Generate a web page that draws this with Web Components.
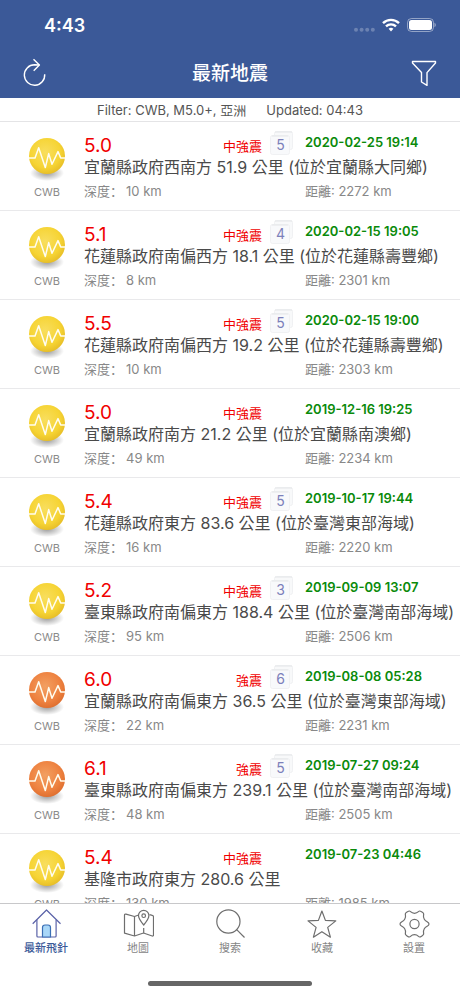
<!DOCTYPE html>
<html lang="zh-Hant">
<head>
<meta charset="utf-8">
<meta name="viewport" content="width=device-width, initial-scale=1">
<title>最新地震</title>
<style>
  html, body { margin: 0; height: 100%; }
  body {
    font-family: Inter, "Noto Sans CJK TC", sans-serif;
    background: #fff;
    color: #4a4a4a;
  }
</style>
</head>
<body>
<quake-app></quake-app>

<script>
const BRAND = '#3b5998';

const QUAKES = [
  { mag: '5.0', level: '中強震', reports: 5, time: '2020-02-25 19:14', place: '宜蘭縣政府西南方 51.9 公里 (位於宜蘭縣大同鄉)', depth: 10, distance: 2272 },
  { mag: '5.1', level: '中強震', reports: 4, time: '2020-02-15 19:05', place: '花蓮縣政府南偏西方 18.1 公里 (位於花蓮縣壽豐鄉)', depth: 8, distance: 2301 },
  { mag: '5.5', level: '中強震', reports: 5, time: '2020-02-15 19:00', place: '花蓮縣政府南偏西方 19.2 公里 (位於花蓮縣壽豐鄉)', depth: 10, distance: 2303 },
  { mag: '5.0', level: '中強震', time: '2019-12-16 19:25', place: '宜蘭縣政府南方 21.2 公里 (位於宜蘭縣南澳鄉)', depth: 49, distance: 2234 },
  { mag: '5.4', level: '中強震', reports: 5, time: '2019-10-17 19:44', place: '花蓮縣政府東方 83.6 公里 (位於臺灣東部海域)', depth: 16, distance: 2220 },
  { mag: '5.2', level: '中強震', reports: 3, time: '2019-09-09 13:07', place: '臺東縣政府南偏東方 188.4 公里 (位於臺灣南部海域)', depth: 95, distance: 2506 },
  { mag: '6.0', level: '強震', reports: 6, time: '2019-08-08 05:28', place: '宜蘭縣政府南偏東方 36.5 公里 (位於臺灣東部海域)', depth: 22, distance: 2231 },
  { mag: '6.1', level: '強震', reports: 5, time: '2019-07-27 09:24', place: '臺東縣政府南偏東方 239.1 公里 (位於臺灣南部海域)', depth: 48, distance: 2505 },
  { mag: '5.4', level: '中強震', time: '2019-07-23 04:46', place: '基隆市政府東方 280.6 公里', depth: 130, distance: 1985 },
];

/** <status-bar> - clock on the left, signal, wifi and battery on the right. */
class StatusBar extends HTMLElement {
  constructor() {
    super();
    this.attachShadow({ mode: 'open' }).innerHTML = `
      <style>
        :host {
          display: flex; align-items: center; justify-content: space-between;
          height: 50px; padding: 0 24px 0 44px; box-sizing: border-box;
          color: #fff; font-size: 18px; font-weight: 600;
        }
        .icons { display: flex; align-items: center; gap: 7px; }
        svg { display: block; }
      </style>
      <time>4:43</time>
      <div class="icons">
        <svg width="21" height="14" viewBox="0 0 21 14" fill="#fff" fill-opacity=".25">
          <circle cx="2" cy="11.800" r="2"/><circle cx="7.600" cy="11.800" r="2"/>
          <circle cx="13.200" cy="11.800" r="2"/><circle cx="18.800" cy="11.800" r="2"/>
        </svg>
        <svg width="18" height="14" viewBox="0 0 18 14" fill="none" stroke="#fff" stroke-width="2.400">
          <path d="M1 5.200A11.400 11.400 0 0 1 17 5.200"/>
          <path d="M4 8.400A7.200 7.200 0 0 1 14 8.400"/>
          <path d="M6.600 10.800a3.500 3.500 0 0 1 4.800 0L9 13.400z" fill="#fff" stroke="none"/>
        </svg>
        <svg width="29" height="14" viewBox="0 0 29 14">
          <rect x=".5" y=".5" width="26" height="13" rx="4" fill="none" stroke="#fff" stroke-opacity=".45"/>
          <rect x="2" y="2" width="23" height="10" rx="2.500" fill="#fff"/>
          <path d="M27.500 4.800c1.700.7 1.700 3.700 0 4.400z" fill="#fff" fill-opacity=".5"/>
        </svg>
      </div>
    `;
  }
}
customElements.define('status-bar', StatusBar);

/** <nav-bar> - slots: start, default (title), end. */
class NavBar extends HTMLElement {
  constructor() {
    super();
    this.attachShadow({ mode: 'open' }).innerHTML = `
      <style>
        :host {
          display: grid; grid-template-columns: 48px 1fr 48px; align-items: center;
          height: 48px; padding: 0 12px; color: #fff;
        }
        h1 { margin: 0; font-size: 19px; line-height: 24px; font-weight: 500; text-align: center; }
      </style>
      <slot name="start"></slot>
      <h1><slot></slot></h1>
      <slot name="end"></slot>
    `;
  }
}
customElements.define('nav-bar', NavBar);

/** <icon-button> - attributes: icon ("refresh" | "filter"), label */
class IconButton extends HTMLElement {
  connectedCallback() {
    const icons = {
      refresh: '<path d="M22.700 14.200a10.200 10.200 0 1 1-10.200-9.400l4.800.2"/><path d="M11.500-.7l5.900 5.800-5.700 5.600"/>',
      filter: '<path d="M2.500 1.500h23v1.500L17 12.600v12.800l-5.500-3.400v-9.400L2.500 3z"/>',
    };
    this.attachShadow({ mode: 'open' }).innerHTML = `
      <style>
        :host { display: block; }
        button {
          display: grid; place-items: center; width: 100%; height: 48px;
          margin: 0; padding: 0; border: 0; background: none; color: inherit; cursor: pointer;
        }
        svg { display: block; overflow: visible; }
      </style>
      <button type="button" aria-label="${this.getAttribute('label')}">
        <svg width="28" height="28" viewBox="0 0 28 28" fill="none" stroke="currentColor"
          stroke-width="1.400" stroke-linejoin="round">${icons[this.getAttribute('icon')]}</svg>
      </button>
    `;
  }
}
customElements.define('icon-button', IconButton);

/** <filter-summary> - the thin line below the header. */
class FilterSummary extends HTMLElement {
  constructor() {
    super();
    this.attachShadow({ mode: 'open' }).innerHTML = `
      <style>
        :host {
          display: flex; justify-content: center; gap: 20px; flex-shrink: 0;
          height: 24px; box-sizing: border-box; line-height: 24px; font-size: 13px; color: #555;
          border-bottom: 1px solid #e4e4e6; white-space: nowrap;
        }
      </style>
      <slot></slot>
    `;
  }
}
customElements.define('filter-summary', FilterSummary);

/** <quake-ball> - seismograph ball with its source. Attributes: tone ("yellow" | "orange") */
class QuakeBall extends HTMLElement {
  connectedCallback() {
    const stops = this.getAttribute('tone') === 'orange'
      ? ['#f2a062', '#ee8240', '#e07030']
      : ['#f8de5e', '#f6d434', '#e8bf28'];
    this.attachShadow({ mode: 'open' }).innerHTML = `
      <style>
        :host { display: flex; flex-direction: column; align-items: center; }
        svg { display: block; }
        .source { font-size: 11px; line-height: 16px; color: #8a8a8a; }
      </style>
      <svg width="44" height="47" viewBox="0 0 44 47">
        <defs>
          <radialGradient id="ball" cx=".45" cy=".4" r=".6">
            <stop offset="0" stop-color="${stops[0]}"/>
            <stop offset=".7" stop-color="${stops[1]}"/>
            <stop offset="1" stop-color="${stops[2]}"/>
          </radialGradient>
          <radialGradient id="shade">
            <stop offset="0" stop-color="#000" stop-opacity=".4"/>
            <stop offset="1" stop-color="#000" stop-opacity="0"/>
          </radialGradient>
        </defs>
        <ellipse cx="22" cy="36" rx="17" ry="8" fill="url(#shade)"/>
        <circle cx="22" cy="19" r="18" fill="url(#ball)"/>
        <path d="M4 21h6l3.700-10.300L20.300 30.600l3.400-14 3.300 10.600 6-12.600 2.700 6.400H40" fill="none"
          stroke="#fffdf0" stroke-width="1.500" stroke-linejoin="round"/>
      </svg>
      <span class="source"><slot></slot></span>
    `;
  }
}
customElements.define('quake-ball', QuakeBall);

/** <report-count> - number of reports on a small stack of sheets. */
class ReportCount extends HTMLElement {
  constructor() {
    super();
    this.attachShadow({ mode: 'open' }).innerHTML = `
      <style>
        :host { display: grid; width: 24px; height: 24px; }
        svg, span { grid-area: 1 / 1; }
        svg { display: block; }
        span {
          width: 21px; padding-top: 4px; box-sizing: border-box;
          font-size: 14px; line-height: 20px; text-align: center; color: #7c80ba;
        }
      </style>
      <svg width="24" height="24" viewBox="0 0 24 24" stroke="#f0f1f3">
        <rect x="4.500" y=".5" width="18" height="18" rx="2" fill="#f8f9fa"/>
        <path d="M5 1h17" stroke="#e4e6e8"/>
        <rect x=".5" y="4.500" width="19" height="19" rx="2" fill="#f8f9fb"/>
        <path d="M2 5h16" stroke="#e4e6e8"/>
      </svg>
      <span><slot></slot></span>
    `;
  }
}
customElements.define('report-count', ReportCount);

/** <quake-row> - one earthquake. Property: quake */
class QuakeRow extends HTMLElement {
  constructor() {
    super();
    this.attachShadow({ mode: 'open' });
  }

  set quake(val) { this._quake = val; this.render(); }
  get quake() { return this._quake; }

  render() {
    const q = this._quake;
    this.shadowRoot.innerHTML = `
      <style>
        :host {
          display: grid; grid-template-columns: 74px minmax(0, 1fr);
          height: 89px; padding-left: 10px; box-sizing: border-box;
          border-bottom: 1px solid #e9e9eb;
        }
        quake-ball { padding-top: 15px; }
        .info {
          display: grid; align-content: start; padding-top: 9px;
          grid-template-columns: minmax(0, 1fr) 43px 155px;
          grid-template-rows: 26px 20px 24px;
        }
        .top { display: flex; align-items: flex-end; justify-content: space-between; color: #f00000; }
        .mag { font-size: 19px; line-height: 22px; }
        .level { font-size: 13px; line-height: 22px; }
        report-count { margin-left: 8px; }
        time { font-size: 13px; line-height: 22px; font-weight: 600; color: #0a8a0a; }
        .place { grid-column: 1 / -1; margin: 0; font-size: 16px; line-height: 20px; font-weight: 400; white-space: nowrap; }
        .fact { font-size: 13px; line-height: 20px; padding-top: 4px; color: #888; white-space: nowrap; }
        .depth { grid-column: 1 / 3; display: flex; gap: 3px; }
        .depth .name { font-family: "Noto Sans CJK SC", sans-serif; }
      </style>
      <quake-ball tone="${parseFloat(q.mag) >= 6 ? 'orange' : 'yellow'}">CWB</quake-ball>
      <div class="info">
        <div class="top"><span class="mag">${q.mag}</span><span class="level">${q.level}</span></div>
        <div>${q.reports ? `<report-count>${q.reports}</report-count>` : ''}</div>
        <time>${q.time}</time>
        <h2 class="place">${q.place}</h2>
        <div class="fact depth"><span class="name" lang="zh-Hans">深度：</span><span>${q.depth} km</span></div>
        <div class="fact">距離: ${q.distance} km</div>
      </div>
    `;
  }
}
customElements.define('quake-row', QuakeRow);

/** <quake-list> - scrolling list. Property: items */
class QuakeList extends HTMLElement {
  constructor() {
    super();
    this.attachShadow({ mode: 'open' }).innerHTML = `
      <style>
        :host { display: block; overflow-y: auto; scrollbar-width: none; }
        ul { margin: 0; padding: 0; list-style: none; }
      </style>
      <ul></ul>
    `;
  }

  set items(val) {
    this.shadowRoot.querySelector('ul').replaceChildren(...val.map(quake => {
      const li = document.createElement('li');
      const row = document.createElement('quake-row');
      row.quake = quake;
      li.append(row);
      return li;
    }));
  }
}
customElements.define('quake-list', QuakeList);

/** <tab-item> - attributes: icon, href, active */
class TabItem extends HTMLElement {
  connectedCallback() {
    const icons = {
      home: `<g stroke="#5a62a8"><path d="M1.700 15.700L15.500 2l14 13.700"/><path d="M5.900 11.700v16.300q0 1 1 1h17.200q1 0 1-1V11.700"/></g>
        <path d="M11.500 29V19.500q0-2.500 2.500-2.500h3q2.500 0 2.500 2.500V29z" fill="#a9d7f8" stroke="#3b6fb5"/>`,
      map: `<path d="M15.600 7L11.500 8.500 3 6.200q-1.500-.3-1.500 1v18l10 2.800 9-3 8.700 3q1.300.2 1.300-1V9q0-1.300-1.200-1.600l-2.800-.8M11.500 8.500V28M20.700 20v5"/>
        <path d="M20.700 17c-2.900-3.500-5.200-6.400-5.200-9.500a5.200 5.200 0 0 1 10.400 0c0 3.100-2.300 6-5.200 9.500z"/><circle cx="20.700" cy="7.700" r="1.800"/>`,
      search: '<circle cx="13.400" cy="13.500" r="11.600"/><path d="M21.700 21.700l7.800 7.800"/>',
      star: '<path d="M14.900 3l3.500 9.400 10.400.5-8.100 6.500 2.700 9.800-8.500-5.500-8.500 5.500 2.700-9.800L1 12.900l10.400-.5z"/>',
      gear: `<path transform="translate(0 .5)" d="M10.500 2.500c1 0 1.500 2.300 5 2.300s4-2.300 5-2.300 4.200 1.800 4.200 2.900c0 1-1 2.600.6 5.300 1.700 2.900 4.700 2.400 4.700 4.800s-3 1.900-4.700 4.800c-1.600 2.700-.6 4.300-.6 5.300s-3.200 2.900-4.200 2.900-1.500-2.300-5-2.300-4 2.300-5 2.300-4.200-1.900-4.200-2.900 1-2.600-.6-5.300C4 17.400 1 17.900 1 15.500s3-1.900 4.700-4.800c1.600-2.700.6-4.300.6-5.300s3.200-2.900 4.200-2.900z"/>
        <circle cx="15.500" cy="16" r="4.600"/>`,
    };
    this.attachShadow({ mode: 'open' }).innerHTML = `
      <style>
        :host { display: block; flex: 1; }
        a {
          display: flex; flex-direction: column; align-items: center; gap: 1px;
          padding-top: 4px; color: #858585; text-decoration: none;
          font-size: 11px; line-height: 16px;
        }
        svg { display: block; stroke: #6e6e6e; }
        :host([active]) a { color: ${BRAND}; font-weight: 500; }
      </style>
      <a href="${this.getAttribute('href')}" ${this.hasAttribute('active') ? 'aria-current="page"' : ''}>
        <svg width="31" height="31" viewBox="0 0 31 31" fill="none" stroke-width="1.200"
          stroke-linejoin="round">${icons[this.getAttribute('icon')]}</svg>
        <span><slot></slot></span>
      </a>
    `;
  }
}
customElements.define('tab-item', TabItem);

/** <tab-bar> - bottom navigation and the home indicator. */
class TabBar extends HTMLElement {
  constructor() {
    super();
    this.attachShadow({ mode: 'open' }).innerHTML = `
      <style>
        :host { display: block; flex-shrink: 0; border-top: 1px solid #c8c8ca; background: #fff; }
        nav { display: flex; height: 77px; }
        .indicator { width: 164px; height: 5px; margin: 0 auto 10px; border-radius: 3px; background: #666; }
      </style>
      <nav><slot></slot></nav>
      <div class="indicator"></div>
    `;
  }
}
customElements.define('tab-bar', TabBar);

class QuakeApp extends HTMLElement {
  connectedCallback() {
    this.attachShadow({ mode: 'open' }).innerHTML = `
      <style>
        :host { display: flex; flex-direction: column; height: 100vh; }
        header { flex-shrink: 0; background: ${BRAND}; }
        quake-list { flex: 1; min-height: 0; }
      </style>
      <header>
        <status-bar></status-bar>
        <nav-bar>
          <icon-button slot="start" icon="refresh" label="重新整理"></icon-button>
          最新地震
          <icon-button slot="end" icon="filter" label="篩選"></icon-button>
        </nav-bar>
      </header>
      <filter-summary><span>Filter: CWB, M5.0+, 亞洲</span><span>Updated: 04:43</span></filter-summary>
      <quake-list></quake-list>
      <tab-bar>
        <tab-item icon="home" href="#latest" active>最新飛針</tab-item>
        <tab-item icon="map" href="#map">地圖</tab-item>
        <tab-item icon="search" href="#search">搜索</tab-item>
        <tab-item icon="star" href="#favorites">收藏</tab-item>
        <tab-item icon="gear" href="#settings">設置</tab-item>
      </tab-bar>
    `;
    this.shadowRoot.querySelector('quake-list').items = QUAKES;
  }
}
customElements.define('quake-app', QuakeApp);
</script>
</body>
</html>
